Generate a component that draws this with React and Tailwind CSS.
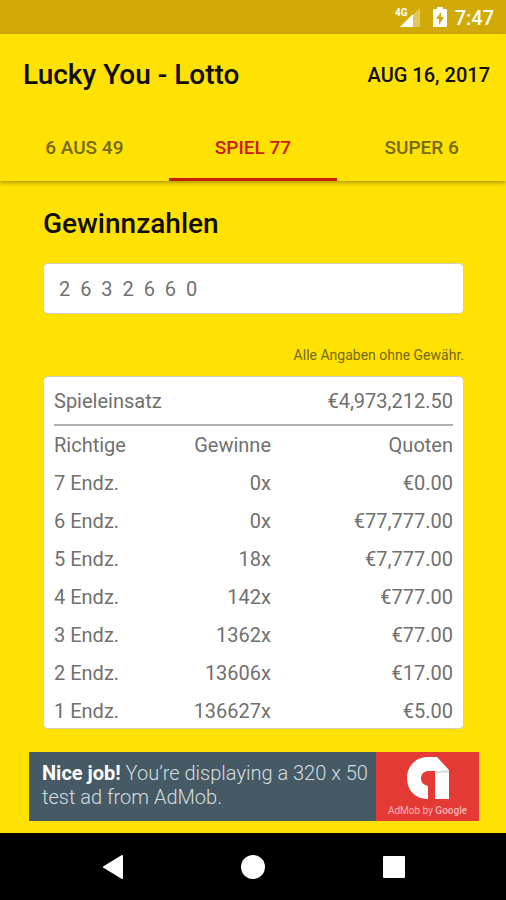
import { useState } from 'react';

const tabs = ['6 AUS 49', 'SPIEL 77', 'SUPER 6'];

const rows = [
  { endz: '7 Endz.', gewinne: '0x', quote: '€0.00' },
  { endz: '6 Endz.', gewinne: '0x', quote: '€77,777.00' },
  { endz: '5 Endz.', gewinne: '18x', quote: '€7,777.00' },
  { endz: '4 Endz.', gewinne: '142x', quote: '€777.00' },
  { endz: '3 Endz.', gewinne: '1362x', quote: '€77.00' },
  { endz: '2 Endz.', gewinne: '13606x', quote: '€17.00' },
  { endz: '1 Endz.', gewinne: '136627x', quote: '€5.00' },
];

function StatusBar() {
  return (
    <div className="flex h-[34px] items-center justify-end bg-[#d1aa08] pr-3 text-white">
      <svg width="26" height="22" viewBox="0 0 26 22" className="mr-3" aria-hidden="true">
        <path d="M25 2v19H5z" fill="#fff" fillOpacity="0.35" />
        <path d="M18 8v13H5z" fill="#fff" />
        <text x="0" y="10" fontSize="10" fontWeight="700" fontFamily="Roboto, sans-serif" fill="#fff">
          4G
        </text>
      </svg>
      <svg width="14" height="20" viewBox="0 0 14 20" className="mr-2" aria-hidden="true">
        <path
          d="M4 0h6v2h3a1 1 0 0 1 1 1v16a1 1 0 0 1-1 1H1a1 1 0 0 1-1-1V3a1 1 0 0 1 1-1h3z"
          fill="#fff"
        />
        <path d="M8 5v5h3l-5 8v-6H3z" fill="#d1aa08" />
      </svg>
      <span className="pt-0.5 text-[20px] leading-6 font-medium">7:47</span>
    </div>
  );
}

function Header({ active, onSelect }) {
  return (
    <header className="relative bg-[#ffe103] shadow-[0_2px_4px_rgba(0,0,0,0.3)]">
      <div className="flex h-[82px] items-center justify-between pr-4 pl-[23px]">
        <h1 className="text-[28px] leading-8 font-medium text-[#0f0e00]">Lucky You - Lotto</h1>
        <button type="button" className="text-[20px] leading-6 font-medium text-[#0f0e00]">
          AUG 16, 2017
        </button>
      </div>
      <nav className="grid grid-cols-3">
        {tabs.map((tab) => (
          <button
            key={tab}
            type="button"
            onClick={() => onSelect(tab)}
            className={
              tab === active
                ? 'h-[65px] border-b-3 border-[#c62000] pt-0.5 text-[19px] leading-6 font-medium text-[#cc1a00]'
                : 'h-[65px] border-b-3 border-transparent pt-0.5 text-[19px] leading-6 font-medium text-[#756a0a]'
            }
          >
            {tab}
          </button>
        ))}
      </nav>
    </header>
  );
}

function Payouts() {
  return (
    <section className="rounded-[5px] border border-[#d0cdb8] bg-white px-[10px] pb-[3px] text-[20px] leading-6 text-[#707070]">
      <div className="flex justify-between border-b-2 border-[#b0b0b0] pt-3 pb-[11px]">
        <span>Spieleinsatz</span>
        <span>€4,973,212.50</span>
      </div>
      <table className="w-full table-fixed">
        <thead>
          <tr>
            <th className="w-[24%] pt-[7px] pb-0.5 text-left font-normal">Richtige</th>
            <th className="pt-[7px] pb-0.5 text-right font-normal">Gewinne</th>
            <th className="w-[182px] pt-[7px] pb-0.5 text-right font-normal">Quoten</th>
          </tr>
        </thead>
        <tbody>
          {rows.map((row) => (
            <tr key={row.endz}>
              <td className="pt-3 pb-0.5">{row.endz}</td>
              <td className="pt-3 pb-0.5 text-right">{row.gewinne}</td>
              <td className="pt-3 pb-0.5 text-right">{row.quote}</td>
            </tr>
          ))}
        </tbody>
      </table>
    </section>
  );
}

function AdBanner() {
  return (
    <a href="#admob" className="mr-[27px] ml-[29px] flex bg-[#455a64]">
      <p className="flex-1 pt-[9px] pb-3 pl-[13px] text-[20px] leading-6 font-light text-[#d5dde1]">
        <strong className="font-bold text-white">Nice job!</strong> You’re displaying a 320 x 50 test ad
        from AdMob.
      </p>
      <div className="flex w-[103px] flex-col items-center justify-between bg-[#e53935] pt-1 pb-0.5">
        <svg width="44" height="44" viewBox="0 0 44 44" aria-hidden="true">
          <path
            d="M22 1h9l12 13v29H29V15h-7a7 7 0 0 0-7 7c0 5 3 7 7 8v13C9 43 1 34 1 22S10 1 22 1z"
            fill="#fff"
          />
          <path d="M29 15l14-1v3H29z" fill="#e0e0e0" />
        </svg>
        <span className="text-[10px] leading-4 text-[#f6b5b3]">
          AdMob by <span className="font-medium">Google</span>
        </span>
      </div>
    </a>
  );
}

function NavBar() {
  return (
    <nav className="grid h-[67px] grid-cols-[1fr_140px_1fr] items-center bg-black">
      <button type="button" aria-label="Back" className="mr-[59px] justify-self-end">
        <svg width="22" height="24" viewBox="0 0 22 24">
          <path d="M20 1L2 12l18 11z" fill="#fff" stroke="#fff" strokeWidth="2" strokeLinejoin="round" />
        </svg>
      </button>
      <button type="button" aria-label="Home" className="justify-self-center">
        <svg width="24" height="24" viewBox="0 0 24 24">
          <circle cx="12" cy="12" r="12" fill="#fff" />
        </svg>
      </button>
      <button type="button" aria-label="Overview" className="ml-[60px] justify-self-start">
        <svg width="22" height="22" viewBox="0 0 22 22">
          <rect width="22" height="22" rx="1" fill="#fff" />
        </svg>
      </button>
    </nav>
  );
}

export default function App() {
  const [active, setActive] = useState('SPIEL 77');

  return (
    <div className="flex min-h-screen flex-col bg-[#ffe103] font-[Roboto,sans-serif]">
      <StatusBar />
      <Header active={active} onSelect={setActive} />
      <main className="flex-1 pt-[25px] pr-[42px] pl-[43px]">
        <label htmlFor="gewinnzahlen" className="block text-[28px] leading-9 font-medium text-[#0f0e00]">
          Gewinnzahlen
        </label>
        <input
          id="gewinnzahlen"
          type="text"
          readOnly
          value="2  6  3  2  6  6  0"
          className="mt-[21px] block h-[51px] w-full rounded-[5px] border border-[#d0cdb8] bg-white px-[15px] text-[20px] text-[#707070] outline-none"
        />
        <p className="mt-[31px] mb-[11px] text-right text-[14px] leading-5 text-[#756a0a]">
          Alle Angaben ohne Gewähr.
        </p>
        <Payouts />
      </main>
      <div className="pt-[23px] pb-3">
        <AdBanner />
      </div>
      <NavBar />
    </div>
  );
}
